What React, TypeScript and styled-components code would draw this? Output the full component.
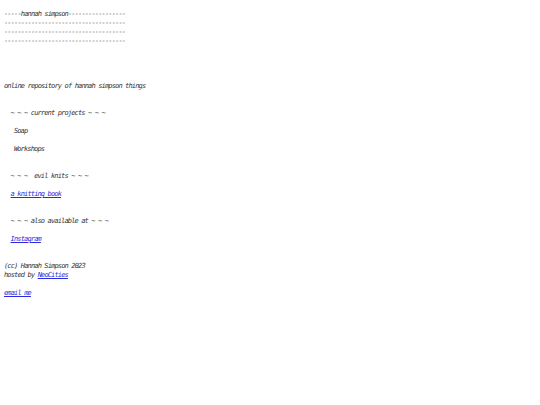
import React from 'react'
import styled, { createGlobalStyle } from 'styled-components'

const Global = createGlobalStyle`
  html, body {
    margin: 0;
    padding: 0;
    background: #ffffff;
  }
`

const Page = styled.div`
  padding: 10px 4px;
  font-family: 'DejaVu Sans Mono', 'Liberation Mono', monospace;
  font-style: italic;
  font-size: 7px;
  letter-spacing: -0.85px;
  color: #333;
`

const Line = styled.div<{ $indent?: number }>`
  height: 9px;
  line-height: 9px;
  white-space: pre;
  padding-left: ${(p) => (p.$indent ?? 0) * 3.3}px;
`

const Blank = styled.div<{ $lines: number }>`
  height: ${(p) => p.$lines * 9}px;
`

const Link = styled.a`
  color: #2a2adf;
  text-decoration: underline;
`

function App() {
  return (
    <Page>
      <Global />
      <Line>-----hannah simpson-----------------</Line>
      <Line>------------------------------------</Line>
      <Line>------------------------------------</Line>
      <Line>------------------------------------</Line>
      <Blank $lines={4} />
      <Line>online repository of hannah simpson things</Line>
      <Blank $lines={2} />
      <Line $indent={2}>~ ~ ~ current projects ~ ~ ~</Line>
      <Blank $lines={1} />
      <Line $indent={3}>Soap</Line>
      <Blank $lines={1} />
      <Line $indent={3}>Workshops</Line>
      <Blank $lines={2} />
      <Line $indent={2}>~ ~ ~  evil knits ~ ~ ~</Line>
      <Blank $lines={1} />
      <Line $indent={2}>
        <Link href="#">a knitting book</Link>
      </Line>
      <Blank $lines={2} />
      <Line $indent={2}>~ ~ ~ also available at ~ ~ ~</Line>
      <Blank $lines={1} />
      <Line $indent={2}>
        <Link href="#">Instagram</Link>
      </Line>
      <Blank $lines={2} />
      <Line>(cc) Hannah Simpson 2023</Line>
      <Line>
        hosted by <Link href="#">NeoCities</Link>
      </Line>
      <Blank $lines={1} />
      <Line>
        <Link href="#">email me</Link>
      </Line>
    </Page>
  )
}

export default App
